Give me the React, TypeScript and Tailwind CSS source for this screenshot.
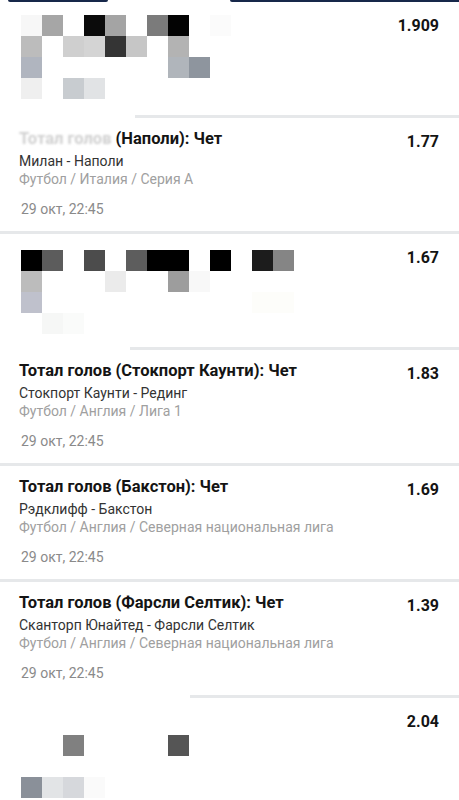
type Bet = {
  title?: string
  fadedPrefix?: string
  teams?: string
  league?: string
  date?: string
  odds: string
  pixels?: string[][]
  pixelTop?: string
  dividerInset?: string
}

// censored blocks, one 21px cell per entry ('' = blank)
const block1 = [
  ['bg-[#f7f7f7]', 'bg-[#a6a6a6]', '', 'bg-[#0b0b0b]', 'bg-[#a4a4a4]', '', 'bg-[#7b7b7b]', 'bg-[#030303]', '', 'bg-[#fbfbfb]'],
  ['bg-[#bcbcbc]', '', 'bg-[#cfcfcf]', 'bg-[#d4d4d4]', 'bg-[#343434]', 'bg-[#c6c6c6]', '', 'bg-[#b3b3b3]'],
  ['bg-[#b0b5bf]', '', '', '', '', '', '', 'bg-[#b0b5bb]', 'bg-[#8e959e]'],
  ['bg-[#efefef]', '', 'bg-[#c8ccd0]', 'bg-[#e1e3e5]'],
]

const block3 = [
  ['bg-[#000000]', 'bg-[#5c5c5c]', '', 'bg-[#4c4c4c]', '', 'bg-[#5d5d5d]', 'bg-[#000000]', 'bg-[#000000]', '', 'bg-[#000000]', '', 'bg-[#1c1c1c]', 'bg-[#858585]'],
  ['bg-[#bcbcbc]', '', '', '', 'bg-[#ebebeb]', '', '', 'bg-[#9d9d9d]', 'bg-[#f8f8f8]'],
  ['bg-[#bfc1cc]', '', '', '', '', '', '', '', '', '', '', 'bg-[#fdfdfa]', 'bg-[#fdfdfa]'],
  ['', 'bg-[#f6f7f6]', 'bg-[#fafbfa]'],
]

const block7 = [
  [],
  ['', '', 'bg-[#808080]', '', '', '', '', 'bg-[#555555]'],
  [],
  ['bg-[#8a9099]', 'bg-[#e2e4e6]', 'bg-[#d6d8dc]', 'bg-[#fafafa]'],
]

const bets: Bet[] = [
  { odds: '1.909', pixels: block1, pixelTop: 'mt-[2px]', dividerInset: 'ml-[135px]' },
  {
    fadedPrefix: 'Тотал голов ',
    title: '(Наполи): Чет',
    teams: 'Милан - Наполи',
    league: 'Футбол / Италия / Серия A',
    date: '29 окт, 22:45',
    odds: '1.77',
  },
  { odds: '1.67', pixels: block3, pixelTop: 'mt-[5px]', dividerInset: 'ml-[130px]' },
  {
    title: 'Тотал голов (Стокпорт Каунти): Чет',
    teams: 'Стокпорт Каунти - Рединг',
    league: 'Футбол / Англия / Лига 1',
    date: '29 окт, 22:45',
    odds: '1.83',
  },
  {
    title: 'Тотал голов (Бакстон): Чет',
    teams: 'Рэдклифф - Бакстон',
    league: 'Футбол / Англия / Северная национальная лига',
    date: '29 окт, 22:45',
    odds: '1.69',
  },
  {
    title: 'Тотал голов (Фарсли Селтик): Чет',
    teams: 'Сканторп Юнайтед - Фарсли Селтик',
    league: 'Футбол / Англия / Северная национальная лига',
    date: '29 окт, 22:45',
    odds: '1.39',
    dividerInset: 'ml-[190px]',
  },
  { odds: '2.04', pixels: block7, pixelTop: 'mt-[5px]' },
]

function Pixels({ rows, top }: { rows: string[][]; top?: string }) {
  return (
    <div className={`flex flex-col pl-[2px] ${top ?? ''}`}>
      {rows.map((row, i) => (
        <div key={i} className="flex h-[21px]">
          {row.map((c, j) => (
            <div key={j} className={`h-[21px] w-[21px] ${c}`} />
          ))}
        </div>
      ))}
    </div>
  )
}

function BetRow({ bet }: { bet: Bet }) {
  return (
    <div className="flex pl-[19px] pr-[20px] pt-[11px] pb-[13px]">
      <div className="flex-1 h-[89px]">
        {bet.pixels ? (
          <Pixels rows={bet.pixels} top={bet.pixelTop} />
        ) : (
          <>
            <div className="text-[16.5px] leading-[20px] font-bold text-[#141414]">
              {bet.fadedPrefix && (
                <span className="text-[#d0d0d0] blur-[1px]">{bet.fadedPrefix}</span>
              )}
              {bet.title}
            </div>
            <div className="mt-[3px] text-[14px] leading-[18px] text-[#333]">{bet.teams}</div>
            <div className="text-[14px] leading-[18px] text-[#a0a0a0]">{bet.league}</div>
            <div className="mt-[12px] pl-[2px] text-[14px] leading-[18px] text-[#8a8a8a]">{bet.date}</div>
          </>
        )}
      </div>
      <div className="mt-[3px] text-[16px] leading-[20px] font-bold text-[#141414]">{bet.odds}</div>
    </div>
  )
}

export default function App() {
  return (
    <div className="w-[459px] h-[800px] overflow-hidden bg-white font-['Roboto',sans-serif]">
      <div className="flex h-[2px]">
        <div className="ml-[8px] w-[100px] bg-[#17284a] rounded-b-full" />
        <div className="ml-[122px] flex-1 bg-[#17284a] rounded-bl-full" />
      </div>
      {bets.map((bet, i) => (
        <div key={i}>
          <BetRow bet={bet} />
          <div className={`h-[3px] bg-[#e6e8ea] ${bet.dividerInset ?? ''}`} />
        </div>
      ))}
    </div>
  )
}
